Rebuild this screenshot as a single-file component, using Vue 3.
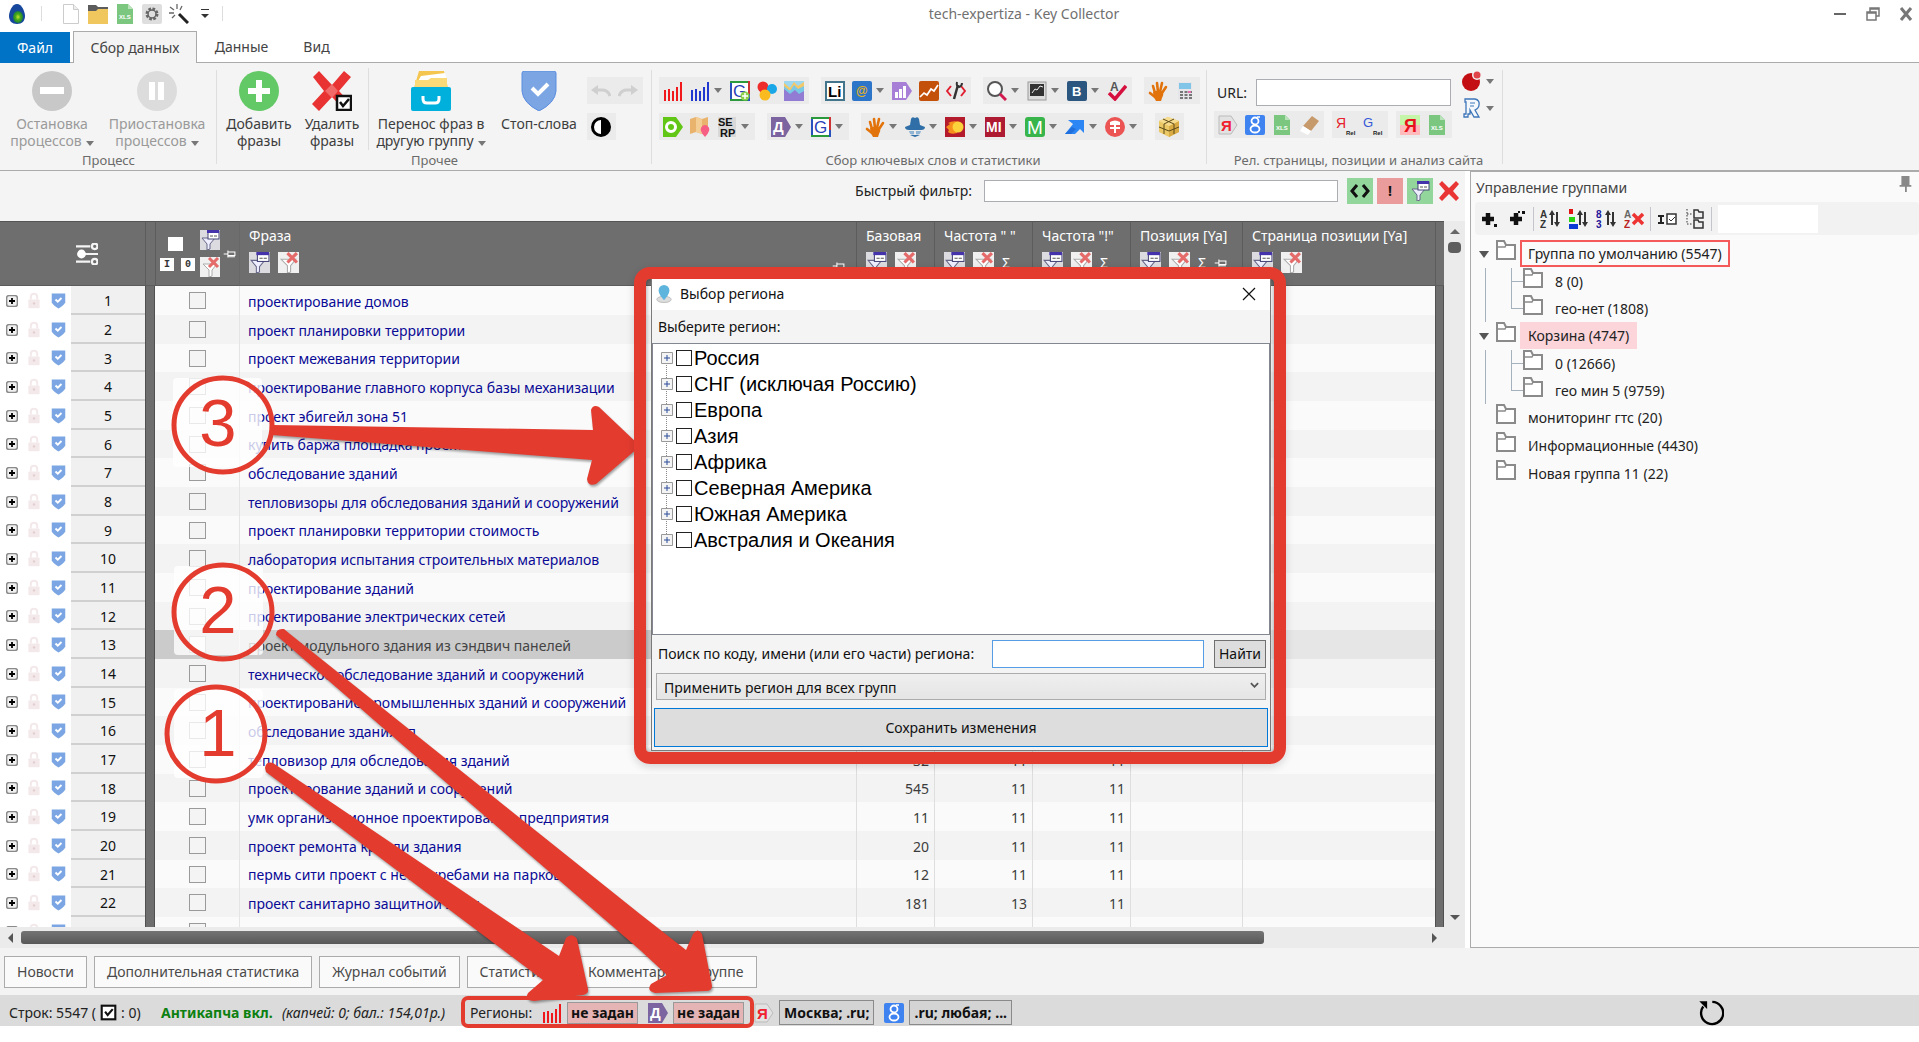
<script setup>
import { h, ref } from 'vue'

const T = (x, y, size, fill, text, extra = '') =>
  `<text x="${x}" y="${y}" font-size="${size}" fill="${fill}" font-family="Liberation Sans, Arial, sans-serif" ${extra}>${text}</text>`

const hand = '<path fill="none" stroke="#e2730b" stroke-linecap="round" stroke-width="2.600" d="M7 12L5 5M10 11L9 2M12 11L14 2M14 12L18 6M7 16L2 12"/><path fill="#e2730b" d="M5 11Q10 8 15 11Q16 14 14 17L13 20H8Q5 16 5 11"/>'
const bars = (c) => `<g fill="${c}"><path d="M1 9h2v11H1zM5 8h2v12H5zM9 10h2v10H9zM13 6h2v14h-2zM17 1h2v19h-2z"/></g>`
const filt = '<path fill="#eef" stroke="#668" d="M2 8h13l-5 6v5l-3 1v-6z"/><rect x="8" y="1" width="11" height="8" fill="#fff" stroke="#447"/><path fill="#43a" d="M7 0h12v3H7z"/><path stroke="#555" d="M10 6h3M14 6h3"/>'
const xls = '<path fill="#7cc77f" d="M2 0h11l5 5v15H2z"/><path fill="#b9e2bb" d="M13 0l5 5h-5z"/>' + T(4, 15, 6, '#fff', 'XLS', 'font-weight="bold"')
const sortArrows = '<path stroke="#333" stroke-width="2" fill="none" d="M12 16V5M17 3v11"/><path fill="#333" d="M9 6l3-5 3 5zM14 13l3 5 3-5z"/>'
const gbox = '<path fill="#fff" d="M0 0h20v20H0z"/><path stroke="#2a52be" stroke-width="2" d="M1 0v20"/><path stroke="#2a9a3c" stroke-width="2" d="M0 1h20M0 19h20"/><path stroke="#c33" stroke-width="2" d="M19 0v13"/><path stroke="#2a52be" stroke-width="2" d="M19 13v7"/>' + T(3, 16, 17, '#2840b8', 'G')

const icons = {
  egg: '<defs><radialGradient id="eg"><stop offset="0" stop-color="#c8e62b"/><stop offset=".5" stop-color="#4caa18"/><stop offset="1" stop-color="#1b7f3c"/></radialGradient></defs><path fill="#17479c" d="M10 0C15 0 18 8 18 12C18 17 15 20 10 20C5 20 2 17 2 12C2 8 5 0 10 0"/><ellipse cx="11" cy="13" rx="5" ry="6" fill="url(#eg)"/>',
  file: '<path fill="#fff" stroke="#ccc" d="M2.500 .5h10l5 5v14h-15z"/><path fill="#eee" stroke="#ccc" d="M12.500 .5v5h5"/>',
  folder: '<path fill="#5c5c5c" d="M0 1h8l2 2h10v8H0z"/><path fill="#efc75e" d="M0 7h8l2-2h10v15H0z"/>',
  xls,
  gear: '<rect width="20" height="20" rx="2" fill="#dedede"/><circle cx="10" cy="10" r="5" fill="none" stroke="#666" stroke-width="3" stroke-dasharray="2.5 1.4"/><circle cx="10" cy="10" r="4" fill="none" stroke="#666" stroke-width="1.500"/>',
  wand: '<path stroke="#222" stroke-width="3" d="M10 10l9 9"/><path stroke="#666" stroke-width="1.300" d="M8 0v5M1 3l4 3M0 9h5M3 14l3-3M13 2l-2 4"/>',
  stop: '<circle cx="20" cy="20" r="20" fill="#c8c8c8"/><rect x="8" y="16" width="24" height="7" fill="#fff"/>',
  pause: '<circle cx="20" cy="20" r="20" fill="#dcdcdc"/><path fill="#fff" d="M12 11h6v18h-6zM21 11h6v18h-6z"/>',
  add: '<circle cx="20" cy="20" r="20" fill="#63c866"/><path fill="#fff" d="M17 9h6v8h8v6h-8v8h-6v-8H9v-6h8z"/>',
  del: '<path fill="#e93232" d="M7 0l13 14L32 0l7 6-12 14 12 13-6 7-13-14L7 40 0 33l12-13L1 6z"/><path fill="#f06a6a" d="M20 13l6 7-6 7-7-7z"/><rect x="25" y="25" width="14" height="14" fill="#fff" stroke="#111" stroke-width="2.500"/><path d="M28 31l3 4 6-7" fill="none" stroke="#111" stroke-width="2.500"/>',
  move: '<path fill="#f5c64f" d="M8 0h25l4 17H3z"/><path fill="#fff" d="M10 5l24-3 2 8H7z"/><path fill="#f9d978" d="M4 9l13 0 3-2h16v10H4z"/><rect y="16" width="40" height="24" rx="2" fill="#00b0dc"/><path fill="none" stroke="#fff" stroke-width="3" d="M12 25v3q0 4 4 4h8q4 0 4-4v-3"/>',
  stopw: '<path fill="#7ba6e3" stroke="#5b8de0" d="M3 2Q3 0 6 0h28q3 0 3 2v18Q36 32 20 40Q4 32 3 20z"/><path fill="none" stroke="#fff" stroke-width="4" d="M13 17l6 6 10-10"/>',
  undo: '<path fill="none" stroke="#cfcfcf" stroke-width="3" d="M19 15q-2-6-8-6H4"/><path fill="#cfcfcf" d="M0 9l7-5v10z"/>',
  redo: '<path fill="none" stroke="#cfcfcf" stroke-width="3" d="M1 15q2-6 8-6h7"/><path fill="#cfcfcf" d="M20 9l-7-5v10z"/>',
  contrast: '<circle cx="10" cy="10" r="8.500" fill="#fff" stroke="#000" stroke-width="3"/><path d="M10 2a8 8 0 0 1 0 16z"/>',
  rbars: bars('#f0181b'), bbars: bars('#2038d0'),
  gplus: gbox + '<circle cx="15" cy="15" r="4.500" fill="#8ccf4d"/><path stroke="#fff" stroke-width="1.500" d="M12 15h6M15 12v6"/>',
  balls: '<circle cx="6" cy="6" r="5.500" fill="#ee2c2c"/><circle cx="15" cy="8" r="5" fill="#19a7e8"/><circle cx="8" cy="14" r="5.500" fill="#f9bb20"/>',
  area: '<path fill="#9fd8ee" d="M0 0h20v20H0z"/><path fill="#f4c868" d="M0 2l6 5 4-6 4 4 6-4v8H0z"/><path fill="#78c8e6" d="M0 5l6 5 4-6 4 4 6-3v8H0z"/><path fill="#927bd2" d="M0 20V8l6 5 5-4 4 4 5-3v10z"/>',
  li: '<path fill="#fff" stroke="#42758c" stroke-width="2" d="M1 1h18v18H1z"/>' + T(3, 16, 15, '#000', 'Li', 'font-weight="bold"'),
  at: '<rect width="20" height="20" rx="2" fill="#2c75c9"/>' + T(4, 14, 12, '#e8b120', '@', 'font-weight="bold"'),
  pbars: '<path fill="#a77fd6" d="M0 1h14l6 9-6 9H0z"/><path fill="#fff" d="M3 11h3v6H3zM7 8h3v9H7zM11 5h3v12h-3z"/>',
  trend: '<rect width="20" height="20" rx="2" fill="#c4510a"/><path fill="none" stroke="#fff" stroke-width="1.700" d="M1 16l4-4 3 2 4-6 3 2 4-6"/>',
  wrench: '<path fill="none" stroke="#e02030" stroke-width="2" d="M5 5l-4 5 4 5M15 5l4 5-4 5"/><path stroke="#333" stroke-width="2.500" d="M12 4L8 18"/><path fill="none" stroke="#333" stroke-width="2" d="M11 1q-1 4 2 5 3-1 3-4"/>',
  mag: '<circle cx="8" cy="8" r="7" fill="#fff" stroke="#555" stroke-width="2"/><path stroke="#d3184e" stroke-width="3" d="M13 13l6 6"/>',
  screen: '<rect x="1" y="1" width="18" height="18" fill="#ddd" stroke="#999"/><rect x="3" y="3" width="14" height="12" fill="#333"/><path fill="none" stroke="#eee" d="M5 12l3-4 2 1 3-4 3 1"/>',
  vk: '<rect width="20" height="20" rx="2" fill="#2b5680"/>' + T(5, 15, 13, '#fff', 'B', 'font-weight="bold"'),
  spell: T(3, 10, 12, '#555', 'A', 'font-weight="bold"') + '<path fill="none" stroke="#d6103e" stroke-width="3.500" d="M2 12l6 6L19 5"/>',
  hand,
  calc: '<rect x="3" y="1" width="14" height="18" fill="#e6e6ea"/><rect x="4" y="2" width="12" height="6" fill="#80c4e8"/><path stroke="#777" stroke-width="2" stroke-dasharray="3 1.500" d="M5 11h12M5 14h12M5 17h12"/><path stroke="#e46db0" stroke-width="2" d="M13 11h3"/>',
  hexo: '<path fill="#62c616" d="M0 0h13l7 10-7 10H0z"/><circle cx="8" cy="10" r="4.500" fill="none" stroke="#fff" stroke-width="3"/>',
  map: '<path fill="#e9b36d" d="M0 2l6-2 6 2 6-2v14l-6 3-6-2-6 2z"/><path fill="#f4cd94" d="M6 0l6 2v15l-6-2z"/><path fill="#f65f83" d="M15 8a4.500 4.500 0 0 1 4 6q-1 3-4 6-3-3-4-6a4.500 4.500 0 0 1 4-6"/>',
  serp: '<rect x="1" width="18" height="20" fill="#d8d8d8"/><g font-weight="bold">' + T(1, 9, 11, '#111', 'SE') + T(3, 20, 11, '#111', 'RP') + '</g>',
  direct: '<path fill="#7b649f" d="M0 0h14l6 10-6 10H0z"/>' + T(2, 15, 15, '#fff', 'Д', 'font-weight="bold"'),
  g: gbox,
  spy: '<path fill="#2f6ea7" d="M5 8l1-6q1-3 4-1 3-2 4 1l1 6 5 2q0 3-4 3H4q-4 0-4-3z"/><path fill="#8fb4d4" d="M4 14h5v3q-4 2-5-3M11 14h5q-1 5-5 3z"/><path fill="#2f6ea7" d="M5 18h10l-5 2z"/>',
  fire: '<rect width="20" height="20" fill="#b31b2c"/><path fill="#f78f1c" d="M1 10l4-3-2-1q5-3 12-1l-3 11q-6 2-9-1l1-2z"/><circle cx="13" cy="10" r="5.500" fill="#fbd13c"/>',
  mi: '<rect width="20" height="20" fill="#ad1a31"/>' + T(1, 15, 14, '#fff', 'MI', 'font-weight="bold"'),
  m: '<rect width="20" height="20" rx="3" fill="#38b54a"/>' + T(2, 17, 19, '#fff', 'M'),
  arrow: '<path fill="#2c86f4" d="M3 3h16v13l-4-4-5 5H0l8-10z"/><path fill="#1f6fdc" d="M0 17l7-7 4 2-5 5z"/>',
  coin: '<circle cx="10" cy="10" r="10" fill="#ec5353"/><path fill="#fff" d="M5 5q5-3 10 0v3h-4v2h4v2h-4v4H9v-4H5v-2h4V8H5z"/>',
  box: '<path fill="#ecc967" d="M0 4l9-4 11 4v11l-10 5-10-5z"/><path fill="#d9ab45" d="M10 9v11l10-5V4z"/><path fill="#f6dc8e" d="M0 4l9-4 11 4-10 5z"/><path fill="none" stroke="#5d4a18" d="M4 2l11 5v10M15 2L5 7v10M0 10l10 4 10-4"/>',
  ya: '<path fill="#e2e2e2" stroke="#bbb" d="M1 1h12l6 9-6 9H1z"/>' + T(3, 16, 15, '#f02030', 'Я', 'font-weight="bold"'),
  goog: '<rect width="20" height="20" rx="2" fill="#3f83f1"/><circle cx="10" cy="6" r="3.500" fill="none" stroke="#fff" stroke-width="1.800"/><ellipse cx="10" cy="14" rx="4.500" ry="3.500" fill="none" stroke="#fff" stroke-width="1.800"/><path stroke="#fff" stroke-width="1.500" d="M12 2h3"/>',
  eraser: '<path fill="#c79a6c" d="M13 1l7 5-8 10-8-5z"/><path fill="#fff" d="M4 11l8 5-3 4-8-4z"/>',
  yrel: T(0, 13, 14, '#e8202c', 'Я') + T(10, 20, 6, '#222', 'Rel', 'font-weight="bold"'),
  grel: T(0, 12, 13, '#3458d8', 'G') + T(10, 20, 6, '#222', 'Rel', 'font-weight="bold"'),
  yhot: '<rect width="20" height="20" fill="#fbb"/><rect width="20" height="10" fill="#c5f5a8"/>' + T(4, 17, 18, '#e8101c', 'Я', 'font-weight="bold"'),
  cherry: '<circle cx="9" cy="11" r="9" fill="#c30f14"/><circle cx="15" cy="4" r="5" fill="#f3f3f3"/><circle cx="15" cy="4" r="3.500" fill="#e0454a"/>',
  r: '<path fill="#f4f8fd" stroke="#3f76b8" stroke-width="1.300" d="M3 1h10q5 1 4 6 0 3-4 5l4 7h-5l-4-7v4H6v3H2v-3h2V4H3z"/><path stroke="#3f76b8" d="M8 5h5M8 8h4" fill="none"/>',
  code: '<path fill="none" stroke="#111" stroke-width="3" d="M7 4l-5 6 5 6M13 4l5 6-5 6"/>',
  filter: filt,
  filterX: '<rect width="20" height="20" fill="#f0f0f0"/><path fill="#fff" stroke="#aaa" d="M3 7h14l-5 6v6l-3 1v-7z"/><path stroke="#e56a6a" stroke-width="3" d="M9 1l9 9M18 1l-9 9"/>',
  filterB: '<rect width="20" height="20" fill="#dcdce0"/>' + filt,
  x: '<path fill="#ea3535" d="M3 0l7 7 7-7 3 3-6 7 6 7-3 3-7-7-7 7-3-3 6-7-6-7z"/>',
  sliders: '<g fill="none" stroke="#f4f4f4" stroke-width="2"><path d="M0 3h13M6 10h15M0 17h13"/><circle cx="17" cy="3" r="2.500"/><circle cx="17" cy="17" r="2.500"/></g><circle cx="5" cy="10" r="4" fill="#fff"/>',
  pin: '<path fill="none" stroke="#fff" stroke-width="1.500" d="M1 10h6M7 5v10M7 7h10v5H7M7 14h10"/>',
  lock: '<rect x="3" y="8" width="14" height="11" rx="1" fill="#f3e9ea"/><path fill="none" stroke="#f3e9ea" stroke-width="2.500" d="M6 8V5q0-4 4-4t4 4v3"/><circle cx="10" cy="13" r="1.500" fill="#e3cdd0"/>',
  shield: '<path fill="#7ba6e3" d="M1 0h18v12q-2 4-9 8-7-4-9-8z"/><path fill="none" stroke="#fff" stroke-width="2.500" d="M6 8l3 3 5-5"/>',
  plusbox: '<rect x="1" y="1" width="18" height="18" rx="4" fill="#f0f0f0" stroke="#8a8a8a" stroke-width="2.500"/><path stroke="#000" stroke-width="3" d="M5 10h10M10 5v10"/>',
  gadd: '<path stroke="#111" stroke-width="4.500" d="M3 10h12M9 4v12"/><path fill="#111" d="M15 15h3v3h-3z"/>',
  gaddu: '<path stroke="#111" stroke-width="4.500" d="M3 10h12M9 4v12"/><path fill="#111" d="M15 2h3v3h-3zM11 2h2v2h-2z"/>',
  az: T(0, 9, 10, '#333', 'A', 'font-weight="bold"') + T(0, 19, 10, '#333', 'Z', 'font-weight="bold"') + sortArrows,
  col: '<path fill="#e01212" d="M1 0h4v5H1z"/><path fill="#2bd310" d="M1 8h6v5H1z"/><path fill="#0b39d6" d="M1 15h9v5H1z"/>' + sortArrows,
  num: T(0, 9, 10, '#23149a', '8', 'font-weight="bold"') + T(0, 19, 10, '#23149a', '3', 'font-weight="bold"') + sortArrows,
  azx: T(0, 9, 10, '#666', 'A', 'font-weight="bold"') + T(0, 19, 10, '#b22', 'Z', 'font-weight="bold"') + '<path stroke="#e33" stroke-width="3.500" d="M9 5l10 10M19 5L9 15"/>',
  sel: '<path fill="none" stroke="#222" stroke-width="2" d="M1 7h6M1 14h6M4 7v7"/><rect x="10" y="5" width="9" height="10" fill="#fff" stroke="#333" stroke-width="1.500"/><path fill="none" stroke="#333" d="M12 10l2 2 4-4"/>',
  tree: '<path stroke="#333" stroke-dasharray="1.500 1.500" fill="none" d="M2 0v15M2 5h6M2 15h6"/><path fill="#eee" stroke="#333" stroke-width="1.500" d="M9 1h4l1 2h4v6H9zM9 11h4l1 2h4v6H9z"/>',
  dir: '<path fill="#fff" stroke="#8a8a8a" stroke-width="2" d="M1 1h7l2 4h9v14H1z"/><path fill="none" stroke="#8a8a8a" stroke-width="1.500" d="M10 5l-1 2H1"/>',
  place: '<ellipse cx="10" cy="16" rx="8" ry="3.500" fill="#ddd" stroke="#bbb"/><path fill="#5db4dd" d="M10 0a6 6 0 0 1 6 6q0 4-6 11-6-7-6-11a6 6 0 0 1 6-6"/>',
  tack: '<path fill="#888" d="M6 1h9v10h2v2h-5v6h-2v-6H4v-2h2z"/>',
  reload: '<path fill="none" stroke="#000" stroke-width="1.800" d="M11 1.500a8.500 8.500 0 1 1-7 3.500"/><path d="M1 1h6v6l-2-2z"/>',
  check: '<rect x="2" y="2" width="16" height="16" fill="#fff" stroke="#111" stroke-width="2.500"/><path fill="none" stroke="#111" stroke-width="2.500" d="M6 9l3 4 6-7"/>',
}
const big = ['stop', 'pause', 'add', 'del', 'move', 'stopw']
const Icon = (p) => h('svg', {
  class: 'ic', 'aria-hidden': 'true',
  viewBox: big.includes(p.name) ? '0 0 40 40' : '0 0 20 20',
  innerHTML: icons[p.name],
})
Icon.props = ['name']

const processBtns = [
  { icon: 'stop', a: 'Остановка', b: 'процессов', w: 104 },
  { icon: 'pause', a: 'Приостановка', b: 'процессов', w: 106 },
]
const otherBtns = [
  { icon: 'move', a: 'Перенос фраз в', b: 'другую группу', drop: true, w: 124 },
  { icon: 'stopw', a: 'Стоп-слова', b: '', w: 92 },
]
const statRows = [
  [['rbars', 'bbars+', 'gplus', 'balls', 'area'], ['li', 'at+', 'pbars', 'trend', 'wrench'], ['mag+', 'screen+', 'vk+', 'spell'], ['hand', 'calc']],
  [['hexo', 'map', 'serp+'], ['direct+', 'g+'], ['hand+', 'spy+', 'fire+', 'mi+', 'm+', 'arrow+', 'coin+'], ['box']],
]
const siteBoxes = [['ya', 'goog', 'xls', 'eraser'], ['yrel', 'grel'], ['yhot', 'xls']]
const nm = (s) => s.replace('+', '')

const numCols = ['Базовая', 'Частота " "', 'Частота "!"', 'Позиция [Ya]', 'Страница позиции [Ya]']
const rows = [
  ['проектирование домов'], ['проект планировки территории'], ['проект межевания территории'],
  ['проектирование главного корпуса базы механизации'], ['проект эбигейл зона 51'],
  ['купить баржа площадка проект в'], ['обследование зданий'],
  ['тепловизоры для обследования зданий и сооружений'], ['проект планировки территории стоимость'],
  ['лаборатория испытания строительных материалов'], ['проектирование зданий'],
  ['проектирование электрических сетей'], ['проект модульного здания из сэндвич панелей'],
  ['техническое обследование зданий и сооружений'], ['проектирование промышленных зданий и сооружений'],
  ['обследование здания сп'], ['тепловизор для обследования зданий', 32, 11, 11],
  ['проектирование зданий и сооружений', 545, 11, 11], ['умк организационное проектирование предприятия', 11, 11, 11],
  ['проект ремонта кровли здания', 20, 11, 11], ['пермь сити проект с небоскребами на парковке', 12, 11, 11],
  ['проект санитарно защитной зоны', 181, 13, 11], [''],
]
const groupTools = ['gadd', 'gaddu', '|', 'az', 'col', 'num', 'azx', '|', 'sel', 'tree', '|']
const groups = [
  { t: 'Группа по умолчанию (5547)', open: true, cls: 'current', kids: ['8 (0)', 'гео-нет (1808)'] },
  { t: 'Корзина (4747)', open: true, cls: 'trash', kids: ['0 (12666)', 'гео мин 5 (9759)'] },
  { t: 'мониторинг гтс (20)', kids: [] },
  { t: 'Информационные (4430)', kids: [] },
  { t: 'Новая группа 11 (22)', kids: [] },
]
const regions = ['Россия', 'СНГ (исключая Россию)', 'Европа', 'Азия', 'Африка', 'Северная Америка', 'Южная Америка', 'Австралия и Океания']
const bottomTabs = ['Новости', 'Дополнительная статистика', 'Журнал событий', 'Статистика', 'Комментарии к группе']
const scope = ref('all')
</script>

<template>
  <div class="app">
    <header class="title">
      <Icon name="egg" class="logo" />
      <i class="vsep"></i>
      <button v-for="n in ['file', 'folder', 'xls', 'gear', 'wand']" :key="n" class="quick" :aria-label="n"><Icon :name="n" /></button>
      <button class="more" aria-label="Ещё"><i></i></button>
      <i class="vsep"></i>
      <h1>tech-expertiza - Key Collector</h1>
      <div class="wctl">
        <button aria-label="Свернуть"><svg viewBox="0 0 14 14"><path d="M1 7h12" stroke="#666" stroke-width="2" /></svg></button>
        <button aria-label="Восстановить"><svg viewBox="0 0 14 14"><path d="M1 5h9v8H1zM4 5V1h9v8h-3M1 6h9M4 2h9" fill="none" stroke="#777" stroke-width="1.5" /></svg></button>
        <button aria-label="Закрыть"><svg viewBox="0 0 14 14"><path d="M2 1l10 12M12 1L2 13" stroke="#777" stroke-width="3" /></svg></button>
      </div>
    </header>

    <nav class="tabs">
      <button class="filetab">Файл</button>
      <button class="on">Сбор данных</button>
      <button>Данные</button>
      <button>Вид</button>
    </nav>

    <section class="ribbon">
      <div class="group g1">
        <div class="content">
          <button v-for="b in processBtns" :key="b.icon" class="bigbtn off" :style="{ width: b.w + 'px' }">
            <Icon :name="b.icon" /><span>{{ b.a }}<br />{{ b.b }}<i class="dd"></i></span>
          </button>
        </div>
        <div class="cap">Процесс</div>
      </div>
      <div class="group g2">
        <div class="content">
          <button class="bigbtn addbtn"><Icon name="add" /><span>Добавить<br />фразы</span></button>
          <button class="bigbtn delbtn"><Icon name="del" /><span>Удалить<br />фразы</span></button>
          <i class="gsep"></i>
          <button v-for="b in otherBtns" :key="b.icon" class="bigbtn" :style="{ width: b.w + 'px' }">
            <Icon :name="b.icon" /><span>{{ b.a }}<br />{{ b.b }}<i v-if="b.drop" class="dd"></i></span>
          </button>
          <div class="stack">
            <div class="ibox"><button aria-label="Отменить"><Icon name="undo" /></button><button aria-label="Повторить"><Icon name="redo" /></button></div>
            <div class="ibox"><button aria-label="Контраст"><Icon name="contrast" /></button></div>
          </div>
        </div>
        <div class="cap">Прочее</div>
      </div>
      <div class="group g3">
        <div class="content">
          <div class="stack">
            <div v-for="(r, i) in statRows" :key="i" class="irow">
              <div v-for="(b, j) in r" :key="j" class="ibox">
                <button v-for="n in b" :key="n" :aria-label="nm(n)" :class="{ drop: n.endsWith('+') }"><Icon :name="nm(n)" /><i v-if="n.endsWith('+')" class="dd"></i></button>
              </div>
            </div>
          </div>
        </div>
        <div class="cap">Сбор ключевых слов и статистики</div>
      </div>
      <div class="group g4">
        <div class="content">
          <div class="site">
            <div class="urlrow"><label for="url">URL:</label><input id="url" type="text" /></div>
            <div class="irow tight">
              <div v-for="(b, j) in siteBoxes" :key="j" class="ibox">
                <button v-for="n in b" :key="n" :aria-label="n"><Icon :name="n" /></button>
              </div>
            </div>
          </div>
          <div class="extra">
            <button aria-label="Сервис"><Icon name="cherry" /><i class="dd"></i></button>
            <button aria-label="R"><Icon name="r" /><i class="dd"></i></button>
          </div>
        </div>
        <div class="cap">Рел. страницы, позиции и анализ сайта</div>
      </div>
    </section>

    <main class="work">
      <section class="left">
        <div class="filterbar">
          <label for="quick">Быстрый фильтр:</label>
          <input id="quick" type="text" />
          <button class="gr" aria-label="Код"><Icon name="code" /></button>
          <button class="rd">!</button>
          <button class="gr" aria-label="Фильтр"><Icon name="filter" /></button>
          <button aria-label="Сбросить"><Icon name="x" /></button>
        </div>
        <div class="gridwrap">
          <div class="tablebox">
            <table>
              <colgroup>
                <col class="c24" /><col class="c24" /><col class="c23" /><col class="cnum" /><col class="cbar" /><col class="cchk" />
                <col /><col class="c78" /><col class="c98" /><col class="c98" /><col class="c112" /><col class="c193" /><col class="cend" />
              </colgroup>
              <thead>
                <tr>
                  <th colspan="4" class="hset"><div><Icon name="sliders" /></div></th>
                  <th class="hb"></th>
                  <th>
                    <div class="hchk">
                      <span class="sq"><b></b><i>I</i><i>0</i></span>
                      <span class="fc"><Icon name="filterB" /><Icon name="filterX" /></span>
                      <Icon name="pin" class="pin" />
                    </div>
                  </th>
                  <th class="hl"><div class="hc">Фраза<span><Icon name="filterB" /><Icon name="filterX" /><Icon name="pin" class="pin far" /></span></div></th>
                  <th v-for="(c, i) in numCols" :key="c"><div class="hc">{{ c }}<span><Icon name="filterB" /><Icon name="filterX" /><em v-if="i > 0 && i < 4">Σ</em><Icon v-if="i === 3" name="pin" class="pin" /></span></div></th>
                  <th></th>
                </tr>
              </thead>
              <tbody>
                <tr v-for="(r, i) in rows" :key="i" :class="{ sel: i === 12 }">
                  <td class="w"><Icon name="plusbox" class="s12" /></td>
                  <td class="w"><Icon name="lock" class="s18" /></td>
                  <td class="w"><Icon name="shield" class="s15" /></td>
                  <td class="num">{{ i < 22 ? i + 1 : '' }}</td>
                  <td class="bar"></td>
                  <td class="chk"><input type="checkbox" :aria-label="'Строка ' + (i + 1)" /></td>
                  <td class="phrase">{{ r[0] }}</td>
                  <td class="n">{{ r[1] }}</td>
                  <td class="n">{{ r[2] }}</td>
                  <td class="n">{{ r[3] }}</td>
                  <td class="n"></td>
                  <td class="last"></td>
                  <td class="bar end"></td>
                </tr>
              </tbody>
            </table>
          </div>
          <div class="vs"><i class="up"></i><b></b><i class="down"></i></div>
        </div>
        <div class="hs"><i class="lf"></i><b></b><i class="rt"></i></div>
      </section>

      <aside class="right">
        <div class="ptitle"><span>Управление группами</span><Icon name="tack" /></div>
        <div class="ptools">
          <template v-for="(n, i) in groupTools" :key="i">
            <i v-if="n === '|'"></i>
            <button v-else :aria-label="n"><Icon :name="n" /></button>
          </template>
          <input type="text" aria-label="Поиск группы" />
        </div>
        <ul class="gtree">
          <li v-for="g in groups" :key="g.t">
            <div class="node"><i class="tri" :class="{ open: g.open }"></i><Icon name="dir" /><span :class="g.cls">{{ g.t }}</span></div>
            <ul v-if="g.kids.length">
              <li v-for="k in g.kids" :key="k" class="node"><Icon name="dir" /><span>{{ k }}</span></li>
            </ul>
          </li>
        </ul>
      </aside>
    </main>

    <nav class="btabs"><button v-for="t in bottomTabs" :key="t">{{ t }}</button></nav>

    <footer class="status">
      <span class="rowsinfo">Строк: 5547 ( <Icon name="check" /> : 0)</span>
      <b class="anti">Антикапча вкл.</b>
      <em>(капчей: 0; бал.: 154,01р.)</em>
      <span class="reg">
        <span>Регионы:</span>
        <Icon name="rbars" /><button class="pink">не задан</button>
        <Icon name="direct" /><button class="pink">не задан</button>
      </span>
      <Icon name="ya" /><button class="geo">Москва; .ru;</button>
      <Icon name="goog" /><button class="geo">.ru; любая; ...</button>
      <button class="reload" aria-label="Обновить"><Icon name="reload" /></button>
    </footer>

    <svg class="notes" aria-hidden="true">
      <g fill="#fff" fill-opacity=".78">
        <rect x="173" y="378" width="89" height="89" rx="4" />
        <rect x="174" y="566" width="89" height="89" rx="4" />
        <rect x="174" y="689" width="89" height="89" rx="4" />
      </g>
      <g class="shapes">
        <path d="M272 425L593 430L591 410Q593 404 599 407L638 444V448L596 484Q588 487 587 479L592 460L272 435Z" />
        <path d="M276 635Q276 628 284 629L290 634L460 770L640 914L686 950L693 934Q698 927 702 934L712 986Q712 991 706 991L655 993Q646 991 651 984L667 975L640 950L420 760Z" />
        <path d="M265 768Q266 761 273 763L559 956L566 938Q572 932 577 939L588 989Q589 994 583 995L534 1001Q524 1000 528 993L543 980L266 772Z" />
      </g>
      <g fill="none" stroke="#e43b2f" stroke-width="5">
        <ellipse cx="223" cy="425" rx="49" ry="47" />
        <ellipse cx="223" cy="612" rx="49" ry="47" />
        <ellipse cx="216" cy="734" rx="49" ry="47" />
      </g>
      <g class="digits">
        <text x="218" y="446">3</text><text x="218" y="633">2</text><text x="218" y="756">1</text>
      </g>
    </svg>

    <div class="frame">
      <form class="dialog" @submit.prevent>
        <div class="dhead"><Icon name="place" /><span>Выбор региона</span><button type="button" aria-label="Закрыть"><svg viewBox="0 0 14 14"><path d="M1 1l12 12M13 1L1 13" stroke="#111" stroke-width="1.2" /></svg></button></div>
        <div class="dlabel">Выберите регион:</div>
        <ul class="dtree">
          <li v-for="r in regions" :key="r"><svg viewBox="0 0 12 12"><path d="M.5 .5h11v11H.5z" fill="#f4f4f4" stroke="#999" /><path d="M3 6h6M6 3v6" stroke="#2a4b98" /></svg><label><input type="checkbox" />{{ r }}</label></li>
        </ul>
        <div class="dsearch"><label for="code">Поиск по коду, имени (или его части) региона:</label><input id="code" type="text" /><button type="button">Найти</button></div>
        <div class="dsel">
          <select v-model="scope" aria-label="Область применения"><option value="all">Применить регион для всех групп</option></select>
          <svg viewBox="0 0 10 6"><path d="M1 1l4 4 4-4" fill="none" stroke="#555" stroke-width="2" /></svg>
        </div>
        <button class="save">Сохранить изменения</button>
      </form>
    </div>
  </div>
</template>

<style>
body { margin: 0; background: #fff; }
</style>

<style scoped>
.app { position: relative; display: flex; flex-direction: column; height: 100vh; min-height: 700px; padding-bottom: 16px; box-sizing: border-box; overflow: hidden; font: 14px/18px "Noto Sans", "Open Sans", sans-serif; color: #222; background: #fff; }
.app *, .app *::before { box-sizing: border-box; }
button, input, select { font: inherit; color: inherit; margin: 0; }
button { border: 0; padding: 0; background: none; }
input[type="text"] { border: 1px solid #abadb3; background: #fff; padding: 0 4px; min-width: 0; }
ul { list-style: none; margin: 0; padding: 0; }
.ic { display: block; width: 20px; height: 20px; flex: none; }
.dd { display: inline-block; border: 4px solid transparent; border-top: 5px solid #777; border-bottom: 0; }

.title { display: flex; align-items: center; height: 31px; padding: 0 6px 4px 7px; flex: none; }
.logo { height: 22px; margin-right: 14px; }
.vsep { width: 1px; height: 15px; background: #ddd; }
.quick { margin-left: 7px; }
.title .vsep + .quick { margin-left: 19px; }
.more { width: 8px; height: 9px; margin: 0 13px 0 12px; border-top: 1px solid #333; display: flex; align-items: flex-end; }
.more i { border: 4px solid transparent; border-top-color: #333; border-bottom: 0; }
h1 { flex: 1; margin: 0; text-align: center; font: inherit; color: #707070; padding-right: 8px; }
.wctl { display: flex; gap: 19px; }
.wctl svg { display: block; width: 14px; height: 14px; }

.tabs { display: flex; height: 32px; border-bottom: 1px solid #ababab; flex: none; }
.tabs button { width: 75px; color: #444; }
.tabs .filetab { width: 70px; height: 31px; margin: 1px 3px 0 0; background: #0173c7; color: #fff; }
.tabs .on { width: 124px; height: 32px; border: 1px solid #ababab; border-bottom: 0; background: #f4f4f4; margin-right: 7px; }

.ribbon { display: flex; height: 108px; background: #f4f4f4; border-bottom: 1px solid #ababab; flex: none; }
.group { display: flex; flex-direction: column; position: relative; padding-top: 8px; }
.group::after { content: ""; position: absolute; right: 0; top: 7px; bottom: 6px; width: 1px; background: #dedede; }
.content { display: flex; flex: 1; height: 80px; }
.cap { text-align: center; color: #6b6b6b; height: 18px; margin-bottom: 1px; font-size: 13px; }
.g1 { width: 217px; }
.g2 { width: 435px; }
.g3 { width: 555px; padding-left: 7px; }
.g4 { width: 296px; padding-left: 7px; }
.bigbtn { display: flex; flex-direction: column; align-items: center; color: #3d3d3d; line-height: 17px; white-space: nowrap; height: 80px; }
.bigbtn .ic { width: 40px; height: 40px; margin-bottom: 4px; }
.bigbtn .dd { margin-left: 4px; }
.off { color: #9a9a9a; }
.addbtn { width: 84px; }
.delbtn { width: 62px; }
.gsep { width: 1px; height: 82px; margin: -3px 0 0 5px; background: #dedede; }
.stack { display: flex; flex-direction: column; gap: 9px; padding-top: 6px; margin-left: 2px; }
.g3 .stack { margin: 0; }
.irow { display: flex; gap: 12px; }
.irow.tight { gap: 8px; }
.ibox { display: flex; width: fit-content; height: 27px; padding: 0 1px; background: #ebebeb; }
.ibox button { width: 27px; display: flex; align-items: center; padding-left: 3px; }
.ibox .drop { width: 40px; gap: 4px; }
.site { display: flex; flex-direction: column; gap: 5px; padding-top: 8px; width: 237px; }
.urlrow { display: flex; align-items: center; padding-left: 3px; }
.urlrow label { width: 39px; }
.urlrow input { flex: 1; height: 27px; }
.extra { display: flex; flex-direction: column; gap: 7px; padding-left: 11px; }
.extra button { display: flex; align-items: center; gap: 4px; }

.work { display: flex; flex: 1; min-height: 0; }
.left { flex: 1; min-width: 0; display: flex; flex-direction: column; background: #f4f4f4; margin-right: 5px; }
.filterbar { display: flex; align-items: center; justify-content: flex-end; height: 50px; padding: 0 6px 10px 0; flex: none; }
.filterbar input { width: 354px; height: 22px; margin: 0 9px 0 12px; }
.filterbar button { width: 26px; height: 26px; margin-right: 4px; display: flex; align-items: center; justify-content: center; font-weight: 700; color: #111; }
.filterbar button:last-child { width: 20px; margin: 0 0 0 2px; }
.gr { background: #93d69c; }
.rd { background: #e99c9b; }
.gridwrap { display: flex; flex: 1; min-height: 0; }
.tablebox { flex: 1; min-width: 0; overflow: hidden; background: #fafafa; }
table { width: 100%; table-layout: fixed; border-spacing: 0; border-collapse: separate; }
.c24 { width: 24px; } .c23 { width: 23px; } .cnum { width: 74px; } .cbar { width: 10px; } .cchk { width: 84px; }
.c78 { width: 78px; } .c98 { width: 98px; } .c112 { width: 112px; } .c193 { width: 193px; } .cend { width: 9px; }
th, td { padding: 0; overflow: hidden; }
th { height: 65px; background: #6e6e6e; color: #fff; font-weight: 400; text-align: left; border-left: 1px solid #5c5c5c; border-top: 1px solid #555; border-bottom: 1px solid #5c5c5c; vertical-align: top; white-space: nowrap; }
th.hl { border-left-color: #686868; }
th.hset { vertical-align: middle; border-left: 0; }
.hset .ic { margin-left: 76px; width: 22px; height: 22px; }
.hset div { border-right: 1px solid #555; padding: 13px 0; margin-right: -3px; }
.hchk { display: flex; align-items: center; height: 63px; padding-left: 4px; }
.sq { display: flex; flex-wrap: wrap; width: 36px; gap: 7px; align-items: center; }
.sq b { width: 15px; height: 14px; margin-left: 8px; background: #fff; }
.sq i { width: 14px; height: 13px; background: #fff; color: #333; font: 700 10px/13px "Liberation Mono", monospace; text-align: center; }
.fc { display: flex; flex-direction: column; gap: 7px; margin: 0 3px 0 4px; }
.pin { width: 14px; height: 14px; }
.hc { padding: 5px 0 0 9px; }
.hc span { display: flex; gap: 8px; margin-top: 7px; align-items: center; }
.hc .ic:not(.pin) { width: 21px; height: 21px; }
.hc em { font-style: normal; line-height: 20px; }
.far { margin: 6px 10px 0 auto; }
td { height: 29px; border-left: 1px solid transparent; }
tr:nth-child(3n) td { height: 28px; }
tbody tr:nth-child(even) { background: #f3f3f3; }
tbody tr { background: #fafafa; }
tbody .sel { background: #cbcbcb; }
.w { background: #fff; border: 0; }
.s12 { width: 12px; height: 12px; margin-left: 6px; }
.s18 { width: 16px; height: 18px; margin-left: 2px; }
.s15 { width: 15px; height: 16px; margin-left: 3px; }
.num { background: #f0f0f0; text-align: center; color: #111; border: 0; border-bottom: 2px solid #d0d0d0; padding-top: 3px; }
.bar { background: #6e6e6e; border: solid #505050; border-width: 0 1px; }
.chk input { appearance: none; display: block; width: 17px; height: 17px; margin: 0 0 0 33px; border: 1px solid #9a9a9a; background: #f4f4f4; }
.phrase { padding: 2px 0 0 8px; color: #0a0a96; white-space: nowrap; border-left-color: #e4e4e4; }
.sel .phrase { color: #444; }
.n { text-align: right; padding: 2px 5px 0 0; color: #3c3c3c; border-left-color: #dedede; }
.last { border-left-color: #dedede; }
.sel .last { background: #e6e6e6; }
.vs { width: 21px; background: #ebebeb; display: flex; flex-direction: column; align-items: center; padding: 8px 0 7px; }
.vs b { width: 13px; height: 11px; border-radius: 4px; background: #5e5e5e; margin: 8px 0 auto; }
.up, .down { border: 5px solid transparent; }
.up { border-bottom-color: #666; border-top: 0; }
.down { border-top-color: #555; border-bottom: 0; }
.hs { display: flex; align-items: center; height: 21px; padding: 0 28px 0 8px; background: #ebebeb; flex: none; }
.hs b { width: 87%; height: 13px; margin: 0 auto 0 8px; border-radius: 3px; background: linear-gradient(#747474, #585858); }
.lf, .rt { border: 5px solid transparent; }
.lf { border-right-color: #555; border-left: 0; }
.rt { border-left-color: #555; border-right: 0; }

.right { width: 449px; background: #fafafa; border: solid #ababab; border-width: 1px 0 1px 1px; flex: none; }
.ptitle { display: flex; justify-content: space-between; padding: 7px 5px 0 5px; height: 30px; color: #444; }
.ptitle .ic { width: 18px; height: 18px; margin-top: -4px; }
.ptools { display: flex; align-items: center; height: 33px; margin-left: 4px; background: #f2f2f2; border-radius: 4px; }
.ptools i { width: 1px; height: 24px; margin: 0 2px; background: #c4c4cc; }
.ptools button { width: 28px; display: flex; justify-content: center; }
.ptools input { width: 100px; height: 28px; border: 0; margin-left: 4px; }
.gtree { padding: 5px 0 0 8px; }
.node { display: flex; height: 27px; }
.gtree > li > .node { height: 28px; }
.gtree .ic { margin-right: 4px; }
.node span { line-height: 22px; height: 27px; padding: 3px 8px 0; }
.node .current { border: 2px solid #f55a5a; padding: 1px 6px 0; }
.node .trash { background: #fbd5da; }
.tri { width: 17px; }
.tri.open::before { content: ""; display: block; width: 10px; margin-top: 11px; border: 5px solid transparent; border-top: 7px solid #555; border-bottom: 0; }
.gtree ul { margin-left: 6px; padding-left: 25px; border-left: 1px solid #a5b1bd; }
.gtree ul .node { position: relative; padding-left: 12px; }
.gtree ul .node::before { content: ""; position: absolute; left: 0; top: 0; width: 12px; height: 14px; border: solid #a5b1bd; border-width: 0 0 1px 1px; }
.gtree ul .node:not(:last-child)::after { content: ""; position: absolute; left: 0; top: 0; height: 27px; border-left: 1px solid #a5b1bd; }

.btabs { display: flex; gap: 7px; height: 47px; padding: 8px 4px 7px; background: #f3f3f3; flex: none; }
.btabs button { padding: 0 12px; border: 1px solid #ababab; background: #fafafa; color: #4a4a4a; }

.status { position: relative; display: flex; align-items: center; height: 31px; padding: 4px 0 0 9px; background: #dbdbdb; white-space: nowrap; flex: none; }
.rowsinfo { display: flex; align-items: center; gap: 4px; width: 152px; }
.rowsinfo .ic { width: 17px; height: 17px; }
.anti { width: 121px; color: #0c8010; }
.status em { width: 180px; }
.reg { display: flex; align-items: center; position: relative; margin: 0 10px 0 8px; height: 22px; }
.reg::before { content: ""; position: absolute; left: -9px; right: -10px; top: -6px; bottom: -4px; border: 4px solid #e43b2f; border-radius: 7px; z-index: 2; }
.reg > span { width: 72px; }
.status button { font-weight: 700; color: #111; }
.pink { width: 71px; height: 22px; margin: 0 10px 0 5px; background: #e5b5b5; border: 1px solid #999; }
.pink:last-child { margin-right: 0; }
.geo { height: 25px; padding: 0 4px; margin: 0 10px 0 5px; border: 1px solid #8a8a8a; background: #d4d4d4; }
.reload { margin: 0 195px 0 auto; }
.reload .ic { width: 26px; height: 26px; }

.notes { position: absolute; left: 0; top: 0; width: 100%; height: 100%; pointer-events: none; }
.shapes { fill: #e43b2f; filter: drop-shadow(1px 2px 1px rgba(0, 0, 0, .35)); }
.digits { font: 67px "Liberation Sans", Arial, sans-serif; fill: #e43b2f; text-anchor: middle; }

.frame { position: absolute; left: 634px; top: 267px; width: 652px; border: 12px solid #e43b2f; border-radius: 16px; padding: 0 3px 1px 5px; box-shadow: 0 3px 8px rgba(0, 0, 0, .15), inset 0 0 5px rgba(0, 0, 0, .4); }
.dialog { background: #f4f4f4; border: 1px solid #7a7a7a; border-top: 0; height: 472px; display: flex; flex-direction: column; color: #111; }
.dhead { display: flex; align-items: center; height: 31px; padding: 0 14px 2px 3px; background: #fff; flex: none; }
.dhead .ic { width: 18px; height: 18px; margin: 0 7px 0 0; }
.dhead button { margin-left: auto; }
.dhead button svg { display: block; width: 14px; height: 14px; }
.dlabel { height: 33px; padding: 8px 6px; flex: none; }
.dtree { flex: 1; background: #fff; border: 1px solid #828790; padding: 1px 0 0 8px; font: 20px/26px "Liberation Sans", Arial, sans-serif; color: #000; }
.dtree li { display: flex; align-items: center; height: 26px; position: relative; }
.dtree li:not(:last-child)::after { content: ""; position: absolute; left: 5px; top: 20px; height: 13px; border-left: 1px dotted #888; }
.dtree svg { width: 12px; height: 12px; margin-right: 3px; }
.dtree label { display: flex; align-items: center; gap: 2px; }
.dtree input { appearance: none; width: 16px; height: 16px; margin: 0; border: 1px solid #222; background: #fff; }
.dsearch { display: flex; align-items: center; margin: 5px 4px 5px 6px; height: 28px; flex: none; }
.dsearch input { width: 212px; height: 28px; margin: 0 10px 0 auto; border-color: #569de5; }
.dsearch button { width: 52px; height: 28px; border: 1px solid #707070; background: #ddd; }
.dsel { position: relative; margin: 0 4px 8px; flex: none; }
.dsel select { display: block; appearance: none; width: 100%; height: 27px; padding: 2px 7px 0; border: 1px solid #acacac; border-radius: 0; background: linear-gradient(#efefef, #e5e5e5); }
.dsel svg { position: absolute; right: 7px; top: 9px; width: 9px; height: 6px; }
.save { height: 39px; margin: 0 2px 3px; border: 1px solid #0078d7; background: #ddd; flex: none; }
</style>
